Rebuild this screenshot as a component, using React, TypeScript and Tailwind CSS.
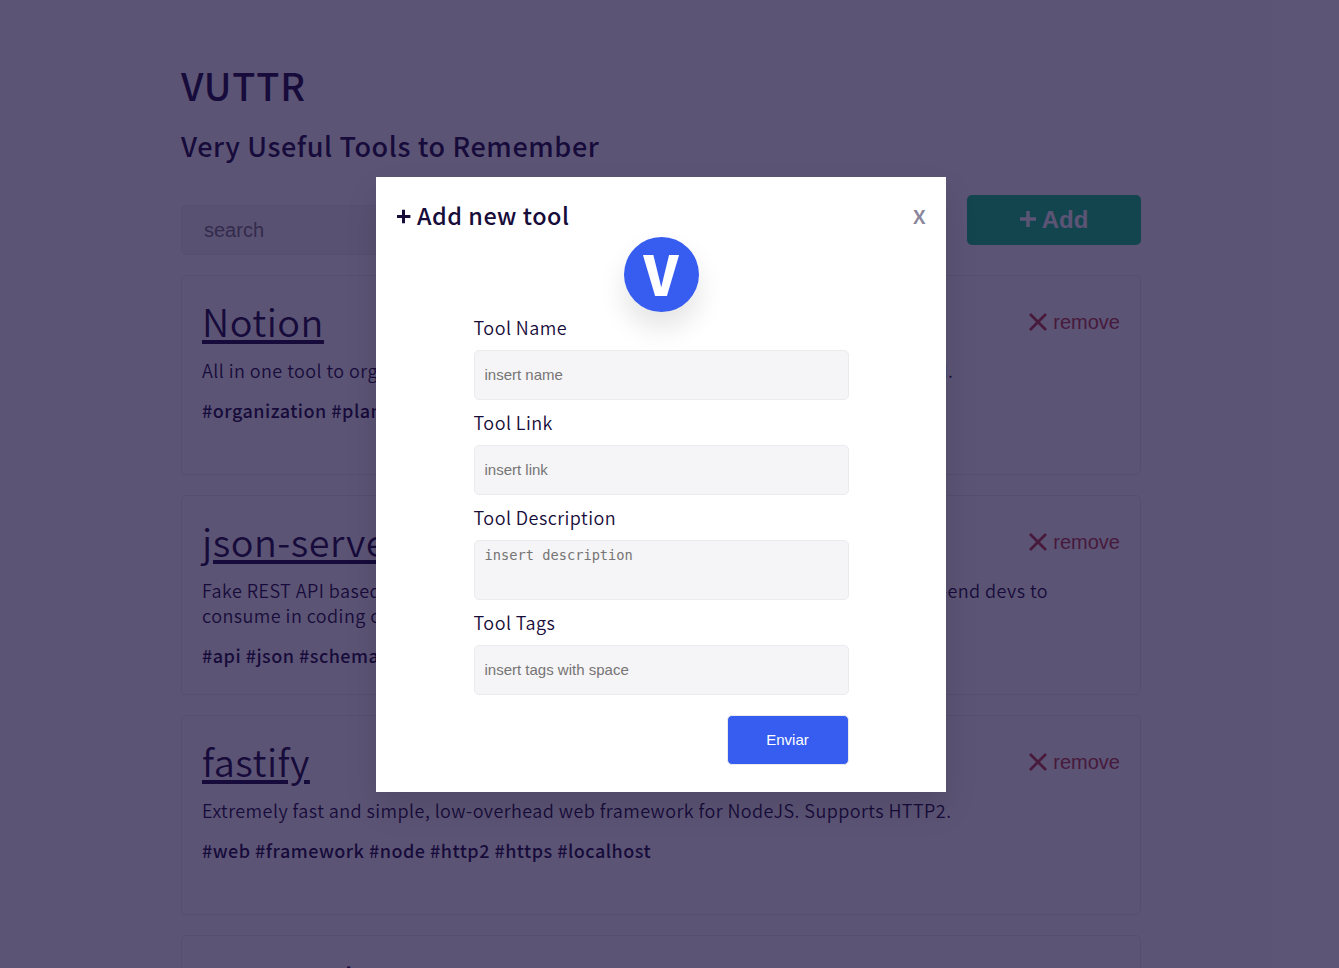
import React from 'react';

type Tool = { title: string; lines: string[]; tags: string };

const tools: Tool[] = [
  {
    title: 'Notion',
    lines: ['All in one tool to organize teams and ideas. Write, plan, collaborate, and get organized.'],
    tags: '#organization #planning #collaboration #writing #calendar',
  },
  {
    title: 'json-server',
    lines: [
      'Fake REST API based on a json schema. Useful for mocking and creating APIs for front-end devs to',
      'consume in coding challenges.',
    ],
    tags: '#api #json #schema #node #github #rest',
  },
  {
    title: 'fastify',
    lines: ['Extremely fast and simple, low-overhead web framework for NodeJS. Supports HTTP2.'],
    tags: '#web #framework #node #http2 #https #localhost',
  },
  { title: 'Renewal', lines: [], tags: '' },
];

function ToolCard({ tool }: { tool: Tool }) {
  return (
    <article className="flex h-[200px] shrink-0 items-start justify-between rounded-[5px] border border-[#ebeaed] bg-white px-5 pt-[18px]">
      <div className="w-0 whitespace-nowrap">
        <h3 className="h-[53px] font-[350] text-[37.8px] leading-[53px] tracking-[0.5px] underline decoration-4 underline-offset-[3px]">
          {tool.title}
        </h3>
        <div className="mt-[11px] font-[350] text-[18px] leading-[25px] tracking-[0.445px]">
          {tool.lines.map((line) => (
            <p key={line}>{line}</p>
          ))}
        </div>
        <p className="mt-[15px] text-[18px] leading-[25px] font-medium tracking-[0.49px]">{tool.tags}</p>
      </div>
      <button className="mt-[16px] flex items-center gap-[6px] font-['Liberation_Sans',Arial,sans-serif] text-[20px] leading-6 text-[#b83e3e]">
        <svg width="18" height="18" viewBox="0 0 18 18" fill="none" stroke="currentColor" strokeWidth="2.8">
          <path d="M1 1 17 17M17 1 1 17" />
        </svg>
        remove
      </button>
    </article>
  );
}

function Field({ label, placeholder }: { label: string; placeholder: string }) {
  return (
    <label className="block h-[95px]">
      <span className="block h-[35px] font-[350] text-[18px] leading-[25px] tracking-[0.45px]">{label}</span>
      <input
        placeholder={placeholder}
        className="block h-[50px] w-full rounded-[5px] border border-[#ebeaed] bg-[#f5f4f6] px-[10px] pb-[2px] font-['Liberation_Sans',Arial,sans-serif] text-[15px] placeholder:text-[#757575]"
      />
    </label>
  );
}

export default function App() {
  return (
    <div className="relative h-[968px] w-full overflow-hidden bg-white font-['Noto_Sans_CJK_JP',sans-serif] text-[#170c3a]">
      <main className="flex w-[1322px] flex-col px-[181px] pt-[58px]">
        <h1 className="h-[53px] text-[37.8px] leading-[53px] font-medium tracking-[0.8px]">VUTTR</h1>
        <h2 className="mt-[16px] h-[38px] text-[27px] leading-[38px] font-medium tracking-[0.6px]">
          Very Useful Tools to Remember
        </h2>
        <div className="mt-[30px] flex h-[60px] justify-between">
          <input
            placeholder="search"
            className="mt-[10px] h-[50px] w-[360px] rounded-[5px] border border-[#ebeaed] bg-[#f5f4f6] px-[22px] font-['Liberation_Sans',Arial,sans-serif] text-[20px] placeholder:text-[#757575]"
          />
          <button className="flex h-[50px] w-[174px] items-center justify-center gap-[6px] rounded-[5px] bg-[#0dcb7d] font-['Liberation_Sans',Arial,sans-serif] text-[24px] font-bold text-white">
            <svg className="-mt-[2px]" width="16" height="16" viewBox="0 0 16 16" fill="none" stroke="currentColor" strokeWidth="3.4">
              <path d="M8 0v16M0 8h16" />
            </svg>
            Add
          </button>
        </div>
        <section className="mt-5 flex w-[960px] flex-col gap-5">
          {tools.map((tool) => (
            <ToolCard key={tool.title} tool={tool} />
          ))}
        </section>
      </main>

      <div className="absolute inset-0 flex items-start bg-[#170c3a]/70 pt-[177px] pl-[376px]">
        <div className="h-[615px] w-[570px] bg-white px-5 pt-[18px] shadow-[0_16px_30px_rgba(0,0,0,0.12)]">
          <header className="flex h-[42px] items-start justify-between">
            <h2 className="flex items-center gap-[6px] text-[23.4px] leading-10 font-medium tracking-[0.5px]">
              <svg className="mt-[2px]" width="15" height="15" viewBox="0 0 15 15" fill="none" stroke="currentColor" strokeWidth="3">
                <path d="M7.5 0.8v13.4M1 7.5h13.4" />
              </svg>
              Add new tool
            </h2>
            <button className="text-[25px] leading-[37px] font-medium text-[#170c3a]/50">x</button>
          </header>
          <div className="mx-auto flex size-[75px] items-start justify-center rounded-full bg-[#365df0] text-[54.5px] leading-[72px] font-black text-white shadow-[0_16px_28px_rgba(0,0,0,0.11)]">
            V
          </div>
          <form className="relative mx-auto mt-[3px] w-[375px]">
            <Field label="Tool Name" placeholder="insert name" />
            <Field label="Tool Link" placeholder="insert link" />
            <label className="block h-[105px]">
              <span className="block h-[35px] font-[350] text-[18px] leading-[25px] tracking-[0.45px]">Tool Description</span>
              <textarea
                placeholder="insert description"
                className="block h-[60px] w-full resize-none rounded-[5px] border border-[#ebeaed] bg-[#f5f4f6] px-[10px] py-[5px] font-['DejaVu_Sans_Mono',monospace] text-[13.7px] leading-[18px] placeholder:text-[#757575]"
              />
            </label>
            <Field label="Tool Tags" placeholder="insert tags with space" />
            <button
              type="button"
              className="mt-[10px] ml-auto block h-[50px] w-[122px] rounded-[5px] border border-[#ebeaed] bg-[#365df0] font-['Liberation_Sans',Arial,sans-serif] text-[15px] text-white"
            >
              Enviar
            </button>
          </form>
        </div>
      </div>
    </div>
  );
}
